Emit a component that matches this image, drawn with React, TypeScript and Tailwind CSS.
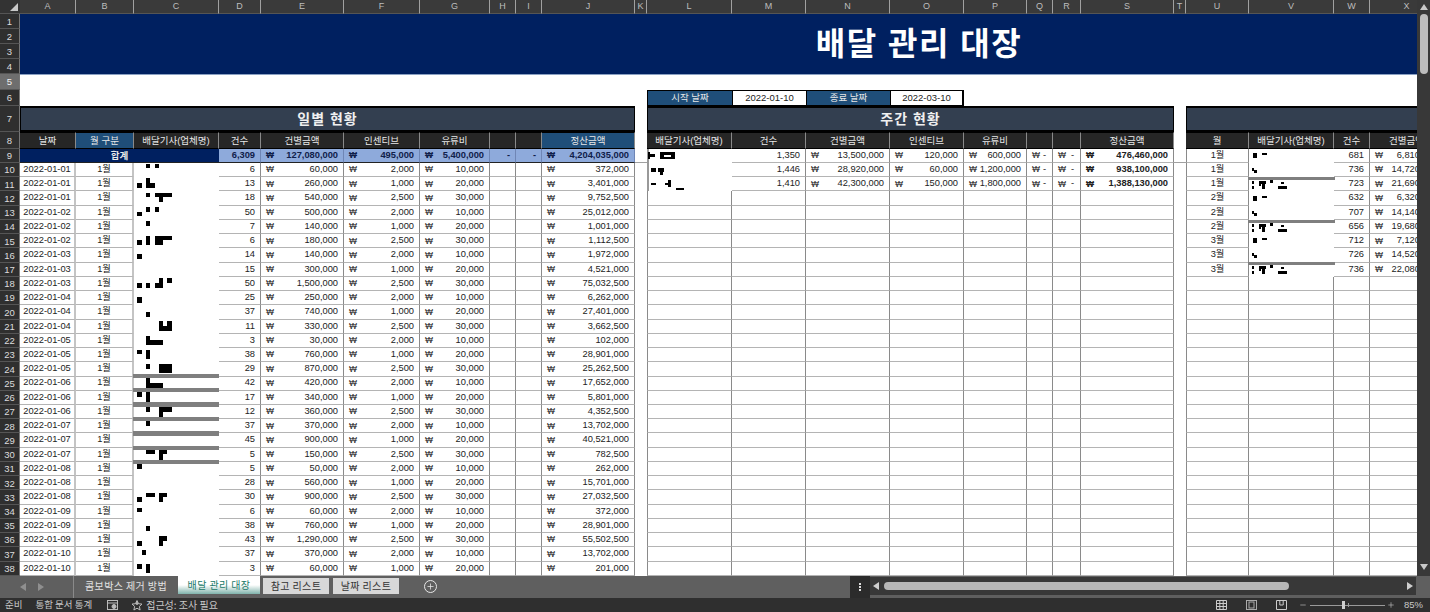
import React from "react";
import { Plus, Minus } from "lucide-react";

const LETTERS = "ABCDEFGHIJKLMNOPQRSTUVWX".split("");
const ROWS = [
  ["01-01", "6", "60,000", "2,000", "10,000", "372,000"],
  ["01-01", "13", "260,000", "1,000", "20,000", "3,401,000"],
  ["01-01", "18", "540,000", "2,500", "30,000", "9,752,500"],
  ["01-02", "50", "500,000", "2,000", "10,000", "25,012,000"],
  ["01-02", "7", "140,000", "1,000", "20,000", "1,001,000"],
  ["01-02", "6", "180,000", "2,500", "30,000", "1,112,500"],
  ["01-03", "14", "140,000", "2,000", "10,000", "1,972,000"],
  ["01-03", "15", "300,000", "1,000", "20,000", "4,521,000"],
  ["01-03", "50", "1,500,000", "2,500", "30,000", "75,032,500"],
  ["01-04", "25", "250,000", "2,000", "10,000", "6,262,000"],
  ["01-04", "37", "740,000", "1,000", "20,000", "27,401,000"],
  ["01-04", "11", "330,000", "2,500", "30,000", "3,662,500"],
  ["01-05", "3", "30,000", "2,000", "10,000", "102,000"],
  ["01-05", "38", "760,000", "1,000", "20,000", "28,901,000"],
  ["01-05", "29", "870,000", "2,500", "30,000", "25,262,500"],
  ["01-06", "42", "420,000", "2,000", "10,000", "17,652,000"],
  ["01-06", "17", "340,000", "1,000", "20,000", "5,801,000"],
  ["01-06", "12", "360,000", "2,500", "30,000", "4,352,500"],
  ["01-07", "37", "370,000", "2,000", "10,000", "13,702,000"],
  ["01-07", "45", "900,000", "1,000", "20,000", "40,521,000"],
  ["01-07", "5", "150,000", "2,500", "30,000", "782,500"],
  ["01-08", "5", "50,000", "2,000", "10,000", "262,000"],
  ["01-08", "28", "560,000", "1,000", "20,000", "15,701,000"],
  ["01-08", "30", "900,000", "2,500", "30,000", "27,032,500"],
  ["01-09", "6", "60,000", "2,000", "10,000", "372,000"],
  ["01-09", "38", "760,000", "1,000", "20,000", "28,901,000"],
  ["01-09", "43", "1,290,000", "2,500", "30,000", "55,502,500"],
  ["01-10", "37", "370,000", "2,000", "10,000", "13,702,000"],
  ["01-10", "3", "60,000", "1,000", "20,000", "201,000"],
];
const WEEK = [
  ["1,350", "13,500,000", "120,000", "600,000", "476,460,000"],
  ["1,446", "28,920,000", "60,000", "1,200,000", "938,100,000"],
  ["1,410", "42,300,000", "150,000", "1,800,000", "1,388,130,000"],
];
const MONTH = [
  ["1월", "681", "6,810,000"],
  ["1월", "736", "14,720,000"],
  ["1월", "723", "21,690,000"],
  ["2월", "632", "6,320,000"],
  ["2월", "707", "14,140,000"],
  ["2월", "656", "19,680,000"],
  ["3월", "712", "7,120,000"],
  ["3월", "726", "14,520,000"],
  ["3월", "736", "22,080,000"],
];

// Black redaction marks and grey strokes, x1,y1,x2,y2 in page pixels
const MARKS: number[][] = [
  [146,164,150,168],[155,164,159,168],[137,183,142,188],[146,178,150,188],[150,183,155,188],
  [146,193,150,197],[155,193,172,197],[159,197,163,202],[137,212,142,216],[146,207,150,212],[155,207,159,212],
  [146,221,150,226],[137,240,142,245],[146,236,150,245],[155,236,172,240],[155,240,163,245],[137,254,142,259],
  [137,283,142,288],[146,283,150,288],[155,283,163,288],[159,278,163,283],[167,278,172,283],[137,297,142,303],
  [146,312,150,317],[159,321,163,331],[167,321,172,331],[163,326,167,331],[146,336,150,345],[150,340,163,345],
  [137,350,142,354],[146,350,150,359],[146,364,150,369],[159,364,172,373],[146,378,150,388],[150,383,163,388],
  [137,392,142,397],[146,392,150,402],[146,407,150,412],[159,407,172,412],[159,412,163,417],[146,421,150,426],
  [146,450,155,454],[159,450,167,454],[159,454,163,460],[137,464,142,469],[146,493,155,497],[159,493,167,497],
  [159,497,163,502],[137,497,142,502],[137,508,142,512],[146,526,150,531],[159,536,167,541],[159,541,163,546],
  [137,541,142,546],[142,550,146,555],[137,564,142,569],[146,564,150,573],
  [648,152,650,159],[650,154,655,157],[660,152,675,155],[660,155,664,159],[660,157,675,159],[671,155,675,159],
  [651,168,656,172],[658,168,664,172],[660,172,663,175],[651,183,656,185],[665,183,671,185],[668,180,671,187],[676,188,684,190],
];
const VMARKS = [
  [1253,153,1257,158],[1262,153,1267,155],[1252,168,1254,171],[1254,170,1257,173],
  [1252,181,1254,184],[1252,186,1254,189],[1259,181,1266,184],[1262,184,1265,189],[1259,184,1261,186],[1270,180,1273,183],[1278,186,1287,189],[1281,182,1284,184],
];
const BARS: number[][] = [
  [133,374,219,378],[133,388,219,392],[133,402,219,407],[133,417,219,421],[133,431,219,436],[133,446,219,450],[133,460,219,464],
  [1248,177,1335,180],[1248,220,1335,223],[1248,262,1335,265],
];

const Redactions = () => (
  <svg className="absolute top-0 left-0 pointer-events-none" width={1417} height={576}>
    {BARS.map((b, i) => <rect key={i} x={b[0]} y={b[1]} width={b[2] - b[0]} height={b[3] - b[1]} fill="#7f7f7f" />)}
    {MARKS.map((b, i) => <rect key={i} x={b[0]} y={b[1]} width={b[2] - b[0]} height={b[3] - b[1]} fill="#000" />)}
    {[0, 43, 85].map((dy) =>
      VMARKS.map((b, i) => <rect key={dy + "-" + i} x={b[0]} y={b[1] + dy} width={b[2] - b[0]} height={b[3] - b[1]} fill="#000" />)
    )}
  </svg>
);

const RowHead = ({ n }: { n: number }) => (
  <div className={`flex items-center justify-center pt-[1px] text-[9.5px] leading-none border-b border-[#555] border-r border-r-[#777] overflow-hidden ${n === 5 ? "bg-[#6e6e6e] text-[#eee]" : "bg-[#2f2f2f] text-[#ddd]"}`}>
    {n}
  </div>
);

const base = "flex items-center overflow-hidden whitespace-nowrap leading-none text-[9.3px] text-[#222] bg-white border-b border-b-[#b4b4b4]";
const vLine = "border-r border-r-[#8a8a8a]";
const softLine = "border-r-2 border-r-[#c4c4c4]";

const Txt = ({ t, cls = "", center = false, line = vLine }: { t?: string; cls?: string; center?: boolean; line?: string }) => (
  <div className={`${base} ${line} ${center ? "justify-center" : "justify-end pr-[5px]"} ${cls}`}>{t}</div>
);
const Money = ({ t, cls = "", pr = "pr-[5px]" }: { t: string; cls?: string; pr?: string }) => (
  <div className={`${base} ${vLine} justify-between pl-[5px] ${pr} ${cls}`}>
    <span className="text-[8.5px]">₩</span>
    <span>{t}</span>
  </div>
);
const Blank = ({ cls = "" }: { cls?: string }) => <div className={`${base} ${vLine} ${cls}`} />;
const Gap = ({ line = false }: { line?: boolean }) => <div className={`bg-white ${line ? "border-b border-b-[#a0a0a0]" : ""}`} />;
const Plain = () => <div className="bg-white" />;

const Head = ({ t, blue = false }: { t?: string; blue?: boolean }) => (
  <div className={`flex items-center justify-center overflow-hidden whitespace-nowrap text-[9.5px] leading-none text-[#e8e8e8] border-y border-y-black border-r border-r-[#8a8a8a] ${blue ? "bg-[#1f4e79]" : "bg-[#262626]"}`}>
    {t}
  </div>
);
const Total = ({ children, cls = "" }: { children?: React.ReactNode; cls?: string }) => (
  <div className={`flex items-center overflow-hidden whitespace-nowrap text-[9.3px] font-bold leading-none text-[#10204a] bg-[#8eaadb] border-b border-b-[#222] border-r border-r-[#6f86b5] ${cls}`}>
    {children}
  </div>
);
const TotalMoney = ({ t }: { t: string }) => (
  <Total cls="justify-between pl-[5px] pr-[5px]">
    <span className="text-[8.5px]">₩</span>
    <span>{t}</span>
  </Total>
);
const Section = ({ t, cls }: { t?: string; cls: string }) => (
  <div className={`${cls} flex items-center justify-center bg-[#333f50] border-y-2 border-x border-black text-[14px] leading-none font-bold tracking-[1px] text-[#f0f0f0]`}>
    {t}
  </div>
);
const DateBox = ({ t, label = false, cls = "" }: { t: string; label?: boolean; cls?: string }) => (
  <div className={`flex items-center justify-center text-[9.5px] leading-none border-y border-y-black border-l border-l-black ${label ? "bg-[#1f4e79] text-[#e8e8e8]" : "bg-white text-[#222]"} ${cls}`}>
    {t}
  </div>
);

const Sheet = () => (
  <div className="relative flex-1 overflow-hidden bg-white">
    <div className="grid w-max grid-cols-[20px_56px_58px_85px_42px_83px_76px_70px_26px_26px_93px_12px_85px_74px_84px_74px_63px_26px_28px_93px_12px_63px_85px_36px_74px] grid-rows-[14px_15px_15px_15px_15px_16px_16px_26px_17px_14px_repeat(29,14.24px)]">
      {/* Column letters */}
      <div className="relative bg-[#333] border-b border-[#555]">
        <svg className="absolute right-[2px] bottom-[2px]" width={8} height={8}><polygon points="8,0 8,8 0,8" fill="#c8c8c8" /></svg>
      </div>
      {LETTERS.map((l) => (
        <div key={l} className="flex items-center justify-center bg-[#3a3a3a] text-[9px] leading-none text-[#bdbdbd] border-r border-r-[#a0a0a0] border-b border-b-[#555]">
          {l}
        </div>
      ))}

      {/* Rows 1-4: banner */}
      <RowHead n={1} />
      <div className="col-span-24 row-span-4 flex items-center justify-center pl-[374px] bg-[#002060]">
        <span className="text-[32px] font-bold leading-none tracking-[1.5px] text-white">배달 관리 대장</span>
      </div>
      <RowHead n={2} />
      <RowHead n={3} />
      <RowHead n={4} />

      {/* Rows 5-6 */}
      <RowHead n={5} />
      <div className="col-span-24 bg-white border-t border-t-[#8aa0c2]" />
      <RowHead n={6} />
      <div className="col-span-11 bg-white" />
      <DateBox t="시작 날짜" label />
      <DateBox t="2022-01-10" />
      <DateBox t="종료 날짜" label />
      <DateBox t="2022-03-10" cls="border-r-2 border-r-black" />
      <div className="col-span-9 bg-white" />

      {/* Row 7 */}
      <RowHead n={7} />
      <Section t="일별 현황" cls="col-span-10" />
      <Plain />
      <Section t="주간 현황" cls="col-span-8" />
      <Plain />
      <Section cls="col-span-4" />

      {/* Row 8 */}
      <RowHead n={8} />
      <Head t="날짜" />
      <Head t="월 구분" blue />
      <Head t="배달기사(업체명)" />
      <Head t="건수" />
      <Head t="건별금액" />
      <Head t="인센티브" />
      <Head t="유류비" />
      <Head />
      <Head />
      <Head t="정산금액" blue />
      <Plain />
      <Head t="배달기사(업체명)" />
      <Head t="건수" />
      <Head t="건별금액" />
      <Head t="인센티브" />
      <Head t="유류비" />
      <Head />
      <Head />
      <Head t="정산금액" />
      <Plain />
      <Head t="월" />
      <Head t="배달기사(업체명)" />
      <Head t="건수" />
      <Head t="건별금액" />

      {/* Rows 9-38 */}
      {Array.from({ length: 30 }, (_, idx) => {
        const n = idx + 9;
        const d = idx > 0 ? ROWS[idx - 1] : null;
        const w = WEEK[idx];
        const m = MONTH[idx];
        return (
          <React.Fragment key={n}>
            <RowHead n={n} />
            {d ? (
              <>
                <Txt t={`2022-${d[0]}`} center line={softLine} />
                <Txt t="1월" center line={softLine} />
                <div className="bg-white" />
                <Txt t={d[1]} />
                <Money t={d[2]} />
                <Money t={d[3]} />
                <Money t={d[4]} />
                <Blank />
                <Blank />
                <Money t={d[5]} />
              </>
            ) : (
              <>
                <div className="col-span-3 flex items-center justify-center bg-[#002060] text-[9.5px] font-bold leading-none text-[#e8e8e8] border-b border-b-[#222]">합계</div>
                <Total cls="justify-end pr-[5px]">6,309</Total>
                <TotalMoney t="127,080,000" />
                <TotalMoney t="495,000" />
                <TotalMoney t="5,400,000" />
                <Total cls="justify-end pr-[5px]">-</Total>
                <Total cls="justify-end pr-[5px]">-</Total>
                <TotalMoney t="4,204,035,000" />
              </>
            )}
            <Gap line={n === 9} />
            {w ? (
              <>
                <div className="bg-white border-l-2 border-l-[#999]" />
                <Txt t={w[0]} />
                <Money t={w[1]} />
                <Money t={w[2]} />
                <Money t={w[3]} />
                <Money t="-" pr="pr-[6px]" />
                <Money t="-" pr="pr-[6px]" />
                <Money t={w[4]} cls="font-bold" />
              </>
            ) : (
              <>
                <Blank cls="border-l border-l-[#8a8a8a]" />
                <Blank />
                <Blank />
                <Blank />
                <Blank />
                <Blank />
                <Blank />
                <Blank />
              </>
            )}
            <Gap line={n === 9} />
            {m ? (
              <>
                <Txt t={m[0]} center cls="border-l border-l-[#8a8a8a]" />
                <div className="bg-white" />
                <Txt t={m[1]} />
                <Money t={m[2]} />
              </>
            ) : (
              <>
                <Blank cls="border-l border-l-[#8a8a8a]" />
                <Blank />
                <Blank />
                <Blank />
              </>
            )}
          </React.Fragment>
        );
      })}
    </div>
    <Redactions />
  </div>
);

const Arrow = ({ dir, cls = "" }: { dir: "up" | "down" | "left" | "right"; cls?: string }) => {
  const pts = { up: "0,6 4,0 8,6", down: "0,0 8,0 4,6", left: "6,0 6,8 0,4", right: "0,0 0,8 6,4" }[dir];
  return (
    <svg width={8} height={8} className={cls}>
      <polygon points={pts} fill="currentColor" />
    </svg>
  );
};

const VScroll = () => (
  <div className="flex w-[13px] flex-col items-center justify-between bg-[#383838] py-[4px] text-[#c8c8c8]">
    <div className="flex flex-col items-center gap-[2px] w-full">
      <Arrow dir="up" />
      <div className="h-[60px] w-[8px] rounded-[4px] bg-[#bdbdbd]" />
    </div>
    <Arrow dir="down" />
  </div>
);

const Tabs = () => (
  <div className="flex h-[22px] bg-[#5f5f5f] font-['Noto_Sans_CJK_KR',sans-serif]">
    <div className="flex w-[74px] items-center justify-center gap-[12px] border-r border-r-[#8a8a8a] text-[#8f8f8f] pr-[10px]">
      <Arrow dir="left" cls="w-[6px]" />
      <Arrow dir="right" cls="w-[6px]" />
    </div>
    <div className="flex h-[20px] w-[104px] items-center justify-center text-[10px] leading-none tracking-[0.4px] text-[#e2e2e2]">콤보박스 제거 방법</div>
    <div className="flex h-[18px] w-[82px] items-center justify-center bg-gradient-to-b from-white via-white to-[#7fb3ac] text-[10px] leading-none tracking-[0.4px] text-[#217a68]">배달 관리 대장</div>
    <div className="ml-[3px] mt-[2px] flex h-[16px] w-[66px] items-center justify-center bg-[#d8d8d8] text-[10px] leading-none tracking-[0.4px] text-[#333]">참고 리스트</div>
    <div className="ml-[4px] mt-[2px] flex h-[16px] w-[66px] items-center justify-center bg-[#d8d8d8] text-[10px] leading-none tracking-[0.4px] text-[#333]">날짜 리스트</div>
    <div className="ml-[25px] mt-[4px] flex h-[13px] w-[13px] items-center justify-center rounded-full border border-[#e8e8e8] text-[#e8e8e8]">
      <Plus size={9} strokeWidth={2} />
    </div>
    <div className="flex-1" />
    <div className="flex h-[22px] w-[20px] flex-col items-center justify-center gap-[1px] bg-[#2b2b2b]">
      <span className="h-[2px] w-[2px] bg-[#ddd]" />
      <span className="h-[2px] w-[2px] bg-[#ddd]" />
      <span className="h-[2px] w-[2px] bg-[#ddd]" />
    </div>
    <div className="mt-[1px] flex h-[18px] w-[546px] items-center gap-[4px] bg-[#383838] px-[3px] text-[#cfcfcf]">
      <Arrow dir="left" cls="w-[6px]" />
      <div className="ml-[1px] h-[8px] w-[405px] rounded-[4px] bg-[#b8b8b8]" />
      <div className="flex-1" />
      <Arrow dir="right" cls="w-[6px]" />
    </div>
    <div className="w-[14px]" />
  </div>
);

const Status = () => (
  <div className="flex h-[14px] items-center bg-[#2f2f2f] font-['Noto_Sans_CJK_KR',sans-serif] text-[9.5px] leading-none text-[#c8c8c8]">
    <span className="ml-[5px]">준비</span>
    <span className="ml-[13px]">통합 문서 통계</span>
    <svg className="ml-[15px]" width={11} height={10} viewBox="0 0 11 10" fill="none" stroke="#bbb">
      <rect x="0.5" y="0.5" width="10" height="9" />
      <path d="M0.5 3h10" />
      <circle cx="7" cy="6.500" r="2" fill="#bbb" />
    </svg>
    <svg className="ml-[13px]" width={12} height={11} viewBox="0 0 12 11" fill="none" stroke="#bbb">
      <path d="M6 0.5l1.5 3.2 3.5.4-2.6 2.3.7 3.6L6 8.2 2.900 10l.7-3.600L1 4.100l3.500-.4z" />
      <circle cx="6" cy="3.500" r="1" fill="#bbb" />
    </svg>
    <span className="ml-[3px] text-[10px]">접근성: 조사 필요</span>
    <div className="flex-1" />
    <svg width={11} height={10} viewBox="0 0 11 10" fill="none" stroke="#ccc">
      <path d="M.5.500h10v9H.5zM.5 3.500h10M.5 6.500h10M3.800.500v9M7.200.500v9" />
    </svg>
    <svg className="ml-[19px]" width={11} height={10} viewBox="0 0 11 10" fill="none" stroke="#aaa">
      <rect x="0.5" y="0.5" width="10" height="9" />
      <rect x="3" y="2" width="5" height="6" />
    </svg>
    <svg className="ml-[19px]" width={11} height={10} viewBox="0 0 11 10" fill="none" stroke="#ccc">
      <path d="M.5.500h10v9H.5zM3.800.500v4.500h3.400V.500" />
    </svg>
    <Minus className="ml-[12px] text-[#bbb]" size={8} strokeWidth={2} />
    <div className="relative ml-[3px] flex h-[8px] w-[75px] items-center">
      <div className="h-[1px] w-full bg-[#9a9a9a]" />
      <div className="absolute left-[32px] top-0 h-[8px] w-[3px] bg-[#cfcfcf]" />
      <div className="absolute left-[38px] top-[2px] h-[4px] w-[1px] bg-[#9a9a9a]" />
    </div>
    <Plus className="ml-[2px] text-[#bbb]" size={8} strokeWidth={2} />
    <span className="ml-[9px] mr-[7px] font-['Liberation_Sans',sans-serif] text-[9.5px]">85%</span>
  </div>
);

export default function App() {
  return (
    <div className="flex h-[612px] w-[1430px] flex-col overflow-hidden bg-[#2f2f2f] font-['Liberation_Sans','Noto_Sans_CJK_KR',sans-serif]">
      <div className="flex h-[576px]">
        <Sheet />
        <VScroll />
      </div>
      <Tabs />
      <Status />
    </div>
  );
}
